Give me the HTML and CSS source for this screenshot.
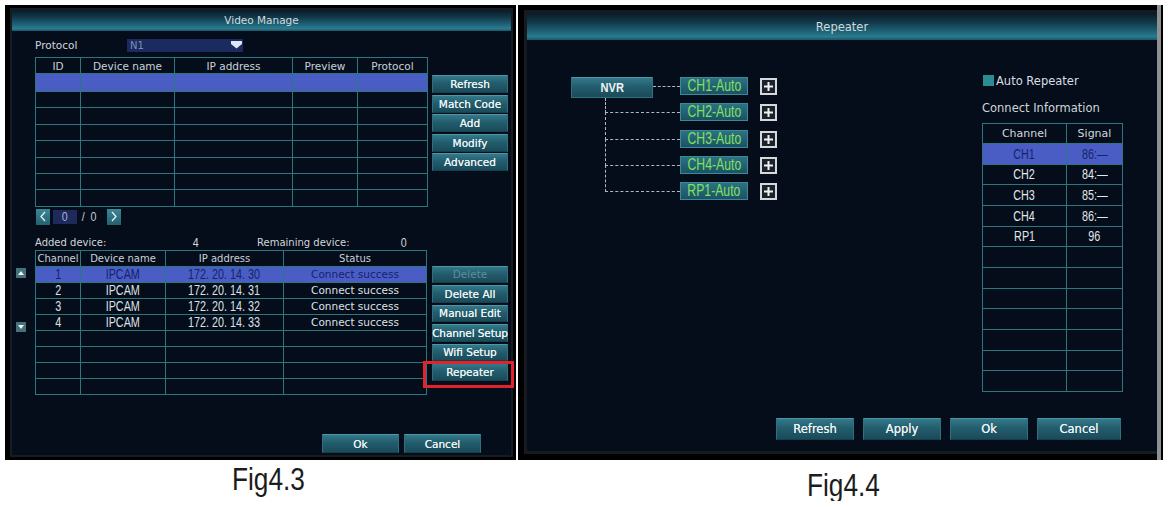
FILE: index.html
```
<!DOCTYPE html>
<html>
<head>
<meta charset="utf-8">
<link rel="stylesheet" href="styles.css">
</head>
<body>
<div class="page">
  <figure class="fig fig-l">
    <div class="screen screen-l">
      <div class="win win-l">
        <div class="titlebar tb-l">Video Manage</div>
        <div class="vm-body">
          <div class="proto-row">
            <span class="lbl">Protocol</span>
            <div class="select"><span class="sel-val">N1</span>
              <svg class="caret" width="11" height="8" viewBox="0 0 11 8"><polygon points="0,0 11,0 11,3 5.5,7.5 0,3" fill="#dce6f6"/></svg>
            </div>
          </div>
          <div class="sec1">
            <table class="grid t1">
              <colgroup><col style="width:45px"><col style="width:94px"><col style="width:118px"><col style="width:65px"><col style="width:70px"></colgroup>
              <tr class="hd"><th>ID</th><th>Device name</th><th>IP address</th><th>Preview</th><th>Protocol</th></tr>
              <tr class="sel"><td></td><td></td><td></td><td></td><td></td></tr>
              <tr><td></td><td></td><td></td><td></td><td></td></tr>
              <tr><td></td><td></td><td></td><td></td><td></td></tr>
              <tr><td></td><td></td><td></td><td></td><td></td></tr>
              <tr><td></td><td></td><td></td><td></td><td></td></tr>
              <tr><td></td><td></td><td></td><td></td><td></td></tr>
              <tr><td></td><td></td><td></td><td></td><td></td></tr>
              <tr><td></td><td></td><td></td><td></td><td></td></tr>
            </table>
            <div class="btncol btncol1">
              <div class="btn">Refresh</div>
              <div class="btn">Match Code</div>
              <div class="btn">Add</div>
              <div class="btn">Modify</div>
              <div class="btn">Advanced</div>
            </div>
          </div>
          <div class="pager">
            <span class="pbtn"><svg width="8" height="11" viewBox="0 0 8 11"><polyline points="6,1 2,5.5 6,10" fill="none" stroke="#e8f0f2" stroke-width="1.3"/></svg></span>
            <span class="pbox"><span class="nar">0</span></span>
            <span class="ptext"><span class="nar">/&nbsp;&nbsp;0</span></span>
            <span class="pbtn"><svg width="8" height="11" viewBox="0 0 8 11"><polyline points="2,1 6,5.5 2,10" fill="none" stroke="#e8f0f2" stroke-width="1.3"/></svg></span>
          </div>
          <div class="added">
            <span>Added device:</span>
            <span class="num"><span class="nar">4</span></span>
            <span>Remaining device:</span>
            <span class="num"><span class="nar">0</span></span>
          </div>
          <div class="sec2">
            <div class="arrows">
              <span class="arr"><svg width="10" height="10" viewBox="0 0 10 10"><polygon points="2,7 8,7 5,3" fill="#f0f4f6"/></svg></span>
              <span class="arr arr-down"><svg width="10" height="10" viewBox="0 0 10 10"><polygon points="2,3 8,3 5,7" fill="#f0f4f6"/></svg></span>
            </div>
            <table class="grid t2">
              <colgroup><col style="width:45px"><col style="width:85px"><col style="width:118px"><col style="width:143px"></colgroup>
              <tr class="hd"><th>Channel</th><th>Device name</th><th>IP address</th><th>Status</th></tr>
              <tr class="sel"><td class="n"><span class="nar tall">1</span></td><td class="n"><span class="nar tall">IPCAM</span></td><td class="n"><span class="nar tall">172. 20. 14. 30</span></td><td>Connect success</td></tr>
              <tr><td class="n"><span class="nar tall">2</span></td><td class="n"><span class="nar tall">IPCAM</span></td><td class="n"><span class="nar tall">172. 20. 14. 31</span></td><td>Connect success</td></tr>
              <tr><td class="n"><span class="nar tall">3</span></td><td class="n"><span class="nar tall">IPCAM</span></td><td class="n"><span class="nar tall">172. 20. 14. 32</span></td><td>Connect success</td></tr>
              <tr><td class="n"><span class="nar tall">4</span></td><td class="n"><span class="nar tall">IPCAM</span></td><td class="n"><span class="nar tall">172. 20. 14. 33</span></td><td>Connect success</td></tr>
              <tr><td></td><td></td><td></td><td></td></tr>
              <tr><td></td><td></td><td></td><td></td></tr>
              <tr><td></td><td></td><td></td><td></td></tr>
              <tr><td></td><td></td><td></td><td></td></tr>
            </table>
            <div class="btncol btncol2">
              <div class="btn dis">Delete</div>
              <div class="btn">Delete All</div>
              <div class="btn">Manual Edit</div>
              <div class="btn wide">Channel Setup</div>
              <div class="btn">Wifi Setup</div>
              <div class="btn hl">Repeater</div>
            </div>
          </div>
        </div>
        <div class="foot foot-l">
          <div class="btn fbtn">Ok</div>
          <div class="btn fbtn">Cancel</div>
        </div>
      </div>
    </div>
    <figcaption class="cap cap-l"><span class="nar">Fig4.3</span></figcaption>
  </figure>

  <figure class="fig fig-r">
    <div class="screen screen-r">
      <div class="win win-r">
        <div class="titlebar tb-r">Repeater</div>
        <div class="rp-main">
          <div class="tree">
            <div class="trow">
              <div class="nvr"><span class="nar">NVR</span></div>
              <div class="hline"></div>
              <div class="chbox"><span class="nar tall">CH1-Auto</span></div>
              <svg class="plus" width="17" height="17" viewBox="0 0 17 17"><rect x="1" y="1" width="15" height="15" fill="#1a222c" stroke="#d6d9dc" stroke-width="2"/><rect x="4" y="7.5" width="9" height="2" fill="#f2f2f2"/><rect x="7.5" y="4" width="2" height="9" fill="#f2f2f2"/></svg>
            </div>
            <div class="trow">
              <div class="conn conn-first"></div>
              <div class="chbox"><span class="nar tall">CH2-Auto</span></div>
              <svg class="plus" width="17" height="17" viewBox="0 0 17 17"><rect x="1" y="1" width="15" height="15" fill="#1a222c" stroke="#d6d9dc" stroke-width="2"/><rect x="4" y="7.5" width="9" height="2" fill="#f2f2f2"/><rect x="7.5" y="4" width="2" height="9" fill="#f2f2f2"/></svg>
            </div>
            <div class="trow">
              <div class="conn"></div>
              <div class="chbox"><span class="nar tall">CH3-Auto</span></div>
              <svg class="plus" width="17" height="17" viewBox="0 0 17 17"><rect x="1" y="1" width="15" height="15" fill="#1a222c" stroke="#d6d9dc" stroke-width="2"/><rect x="4" y="7.5" width="9" height="2" fill="#f2f2f2"/><rect x="7.5" y="4" width="2" height="9" fill="#f2f2f2"/></svg>
            </div>
            <div class="trow">
              <div class="conn"></div>
              <div class="chbox"><span class="nar tall">CH4-Auto</span></div>
              <svg class="plus" width="17" height="17" viewBox="0 0 17 17"><rect x="1" y="1" width="15" height="15" fill="#1a222c" stroke="#d6d9dc" stroke-width="2"/><rect x="4" y="7.5" width="9" height="2" fill="#f2f2f2"/><rect x="7.5" y="4" width="2" height="9" fill="#f2f2f2"/></svg>
            </div>
            <div class="trow">
              <div class="conn"></div>
              <div class="chbox"><span class="nar tall">RP1-Auto</span></div>
              <svg class="plus" width="17" height="17" viewBox="0 0 17 17"><rect x="1" y="1" width="15" height="15" fill="#1a222c" stroke="#d6d9dc" stroke-width="2"/><rect x="4" y="7.5" width="9" height="2" fill="#f2f2f2"/><rect x="7.5" y="4" width="2" height="9" fill="#f2f2f2"/></svg>
            </div>
          </div>
          <div class="info">
            <div class="chkrow"><span class="chk"></span><span>Auto Repeater</span></div>
            <div class="ci">Connect Information</div>
            <table class="grid t3">
              <colgroup><col style="width:84px"><col style="width:56px"></colgroup>
              <tr class="hd"><th>Channel</th><th>Signal</th></tr>
              <tr class="sel"><td class="n"><span class="nar tall">CH1</span></td><td class="n"><span class="nar tall">86:&#8212;</span></td></tr>
              <tr><td class="n"><span class="nar tall">CH2</span></td><td class="n"><span class="nar tall">84:&#8212;</span></td></tr>
              <tr><td class="n"><span class="nar tall">CH3</span></td><td class="n"><span class="nar tall">85:&#8212;</span></td></tr>
              <tr><td class="n"><span class="nar tall">CH4</span></td><td class="n"><span class="nar tall">86:&#8212;</span></td></tr>
              <tr><td class="n"><span class="nar tall">RP1</span></td><td class="n"><span class="nar tall">96</span></td></tr>
              <tr><td></td><td></td></tr>
              <tr><td></td><td></td></tr>
              <tr><td></td><td></td></tr>
              <tr><td></td><td></td></tr>
              <tr><td></td><td></td></tr>
              <tr><td></td><td></td></tr>
              <tr><td></td><td></td></tr>
            </table>
          </div>
        </div>
        <div class="foot foot-r">
          <div class="btn rbtn">Refresh</div>
          <div class="btn rbtn">Apply</div>
          <div class="btn rbtn">Ok</div>
          <div class="btn rbtn rbtn-wide">Cancel</div>
        </div>
      </div>
      <div class="strip"></div>
    </div>
    <figcaption class="cap cap-r"><span class="nar">Fig4.4</span></figcaption>
  </figure>
</div>
</body>
</html>
```

FILE: styles.css
```
* { box-sizing: border-box; }
body {
  margin: 0;
  background: #ffffff;
  font-family: "DejaVu Sans", sans-serif;
  color: #d6dde2;
}
.nar {
  display: inline-block;
  font-family: "Liberation Sans", Arial, sans-serif;
  transform: scaleX(0.82);
  transform-origin: center;
  white-space: nowrap;
}
.nar.tall {
  transform: scaleX(0.72);
}
.page {
  display: flex;
  padding: 5px 0 0 5px;
}
.fig {
  margin: 0;
  display: flex;
  flex-direction: column;
}

/* screens */
.screen {
  background: #000;
  height: 455px;
}
.screen-l {
  width: 511px;
  padding: 3px 3px 3px 5px;
}
.screen-r {
  width: 645px;
  margin-left: 2px;
  display: flex;
}
.win {
  background: #050d1a;
  display: flex;
  flex-direction: column;
}
.win-l {
  height: 100%;
  border: 2px solid #171c23;
}
.win-r {
  width: 633px;
  margin: 5px 0 6px 6px;
  border: 3px solid #161b22;
  border-right: 0;
}
.strip {
  width: 4px;
  background: #8e9092;
}

.titlebar {
  text-align: center;
  color: #d2dade;
  background: linear-gradient(#0a1a26 0%, #12394a 35%, #1f6579 70%, #2a7c90 88%, #1b5464 100%);
}
.tb-l {
  height: 21px;
  line-height: 21px;
  font-size: 10.5px;
}
.tb-r {
  height: 27px;
  line-height: 28px;
  font-size: 11.5px;
}

/* left body */
.vm-body {
  padding-left: 23px;
  font-size: 10px;
}
.proto-row {
  margin-top: 7px;
  height: 14px;
  display: flex;
  align-items: center;
}
.lbl {
  width: 92px;
  font-size: 10.5px;
  color: #d0d7dc;
}
.select {
  width: 116px;
  height: 13px;
  background: #1b2a5f;
  display: flex;
  align-items: center;
  justify-content: space-between;
  padding: 0 1px 0 3px;
}
.sel-val {
  font-size: 10px;
  color: #7f8fb5;
}
.caret { display: block; }

.sec1 {
  display: flex;
  margin-top: 5px;
  align-items: flex-start;
}
.grid {
  border-collapse: collapse;
  table-layout: fixed;
}
.grid th, .grid td {
  border: 1px solid #2c7680;
  padding: 0;
  text-align: center;
  font-weight: normal;
  white-space: nowrap;
  overflow: hidden;
}
.t1 { width: 392px; }
.t1 th { height: 16px; font-size: 10.5px; color: #c9d1d8; }
.t1 td { height: 16.375px; }
.sel td { background: #4a5dc5; color: #142268; }
.t1 .sel td { height: 18px; }

.btncol {
  display: flex;
  flex-direction: column;
}
.btncol1 {
  margin-left: 4px;
  padding-top: 18px;
  gap: 1.5px;
}
.btncol1 .btn { width: 76px; height: 18px; }

.btn {
  display: flex;
  align-items: center;
  justify-content: center;
  white-space: nowrap;
  font-size: 10.5px;
  color: #eef3f5;
  text-shadow: 0 0 0.5px #eef3f5;
  background: linear-gradient(#33798a 0%, #235d6d 45%, #1a4b5a 100%);
  border: 1px solid #2f6f7e;
  border-top-color: #4e97a6;
  border-bottom-color: #163f4c;
}
.btn.dis {
  color: #5f8e9b;
  text-shadow: none;
}
.btn.wide { letter-spacing: -0.1px; }
.btn.hl { position: relative; }
.btn.hl::after {
  content: "";
  position: absolute;
  top: -3px;
  left: -10px;
  right: -7px;
  bottom: -8px;
  border: 3px solid #e2222d;
}

.pager {
  margin-top: 2px;
  height: 16px;
  display: flex;
  align-items: center;
}
.pbtn {
  width: 14px;
  height: 16px;
  margin-left: 1px;
  background: linear-gradient(#3a8797, #24606f);
  display: flex;
  align-items: center;
  justify-content: center;
}
.pbtn svg { display: block; }
.pbox {
  width: 24px;
  height: 14px;
  margin-left: 3px;
  background: #1e2a5c;
  color: #a6b4d6;
  font-size: 13px;
  line-height: 14px;
  text-align: center;
}
.ptext {
  width: 29px;
  padding-left: 3px;
  font-size: 13px;
  color: #c4ccd2;
}

.added {
  margin-top: 10px;
  height: 13px;
  display: grid;
  grid-template-columns: 156px 66px 142px auto;
  align-items: center;
  color: #d0d7dc;
}
.added .num {
  font-size: 13px;
  padding-left: 1px;
}

.sec2 {
  display: flex;
  align-items: flex-start;
  margin-top: 2px;
  margin-left: -19px;
}
.arrows {
  width: 10px;
  margin-right: 9px;
  padding-top: 18px;
  display: flex;
  flex-direction: column;
  gap: 44px;
}
.arr {
  width: 10px;
  height: 10px;
  background: #46707a;
  display: block;
}
.arr svg { display: block; }
.t2 { width: 391px; }
.t2 th { height: 16px; font-size: 10px; color: #c9d1d8; }
.t2 td { height: 16.1px; font-size: 10.5px; color: #dbe2e6; line-height: 14px; }
.t2 td.n { font-size: 15px; line-height: 14px; }
.t2 .sel td { color: #15236a; }

.btncol2 {
  margin-left: 5px;
  padding-top: 16px;
  gap: 2px;
}
.btncol2 .btn { width: 76px; height: 17.5px; }

.foot {
  margin-top: auto;
  display: flex;
  justify-content: flex-end;
}
.foot-l {
  gap: 5px;
  padding: 0 30px 2px 0;
}
.fbtn { width: 77px; height: 19px; }

/* right window */
.rp-main {
  display: flex;
  align-items: flex-start;
}
.tree {
  margin: 37px 0 0 44px;
  display: flex;
  flex-direction: column;
  gap: 8.25px;
}
.trow {
  display: flex;
  align-items: flex-start;
  height: 18px;
}
.nvr {
  width: 82px;
  height: 21px;
  display: flex;
  align-items: center;
  justify-content: center;
  font-size: 13.5px;
  font-weight: bold;
  color: #eef2f4;
  background: linear-gradient(#33798a 0%, #235d6d 45%, #1a4b5a 100%);
  border: 1px solid #2f6f7e;
  border-top-color: #4e97a6;
}
.hline {
  width: 27px;
  height: 10px;
  border-bottom: 1px dashed #aeb8c0;
}
.conn {
  margin-left: 34px;
  width: 75px;
  margin-top: -17.25px;
  height: 27.25px;
  border-left: 1px dashed #aeb8c0;
  border-bottom: 1px dashed #aeb8c0;
}
.conn.conn-first {
  margin-top: -5.25px;
  height: 15.25px;
}
.chbox {
  width: 68px;
  height: 18px;
  display: flex;
  align-items: center;
  justify-content: center;
  font-size: 17px;
  color: #82e060;
  background: linear-gradient(#2c7282, #1b5263);
  border: 1px solid #3a8a9c;
  overflow: hidden;
}
.plus {
  display: block;
  margin: 1px 0 0 12px;
}

.info {
  margin: 35px 35px 0 auto;
  width: 140px;
}
.chkrow {
  height: 11px;
  display: flex;
  align-items: center;
  font-size: 11.5px;
  color: #d8dee2;
}
.chk {
  width: 11px;
  height: 11px;
  margin: 0 2px 0 1px;
  background: #2b8d92;
}
.ci {
  margin-top: 15px;
  line-height: 14px;
  font-size: 11.5px;
  color: #cfd6db;
}
.t3 {
  margin-top: 8px;
  width: 140px;
}
.t3 th { height: 20px; font-size: 11px; color: #d0d8dc; }
.t3 td { height: 20.67px; color: #e2e7ea; }
.t3 td.n { font-size: 15px; }
.t3 .sel td { color: #16246c; }

.foot-r {
  gap: 9px;
  padding: 0 36px 11px 0;
}
.rbtn { width: 78px; height: 22px; font-size: 11.5px; }
.rbtn-wide { width: 84px; }

/* captions */
.cap {
  font-size: 32px;
  line-height: 32px;
  color: #1c1c1c;
  text-align: center;
}
.cap-l { margin-top: 3px; padding-left: 16px; }
.cap-r { margin-top: 9px; padding-left: 7px; }
```
